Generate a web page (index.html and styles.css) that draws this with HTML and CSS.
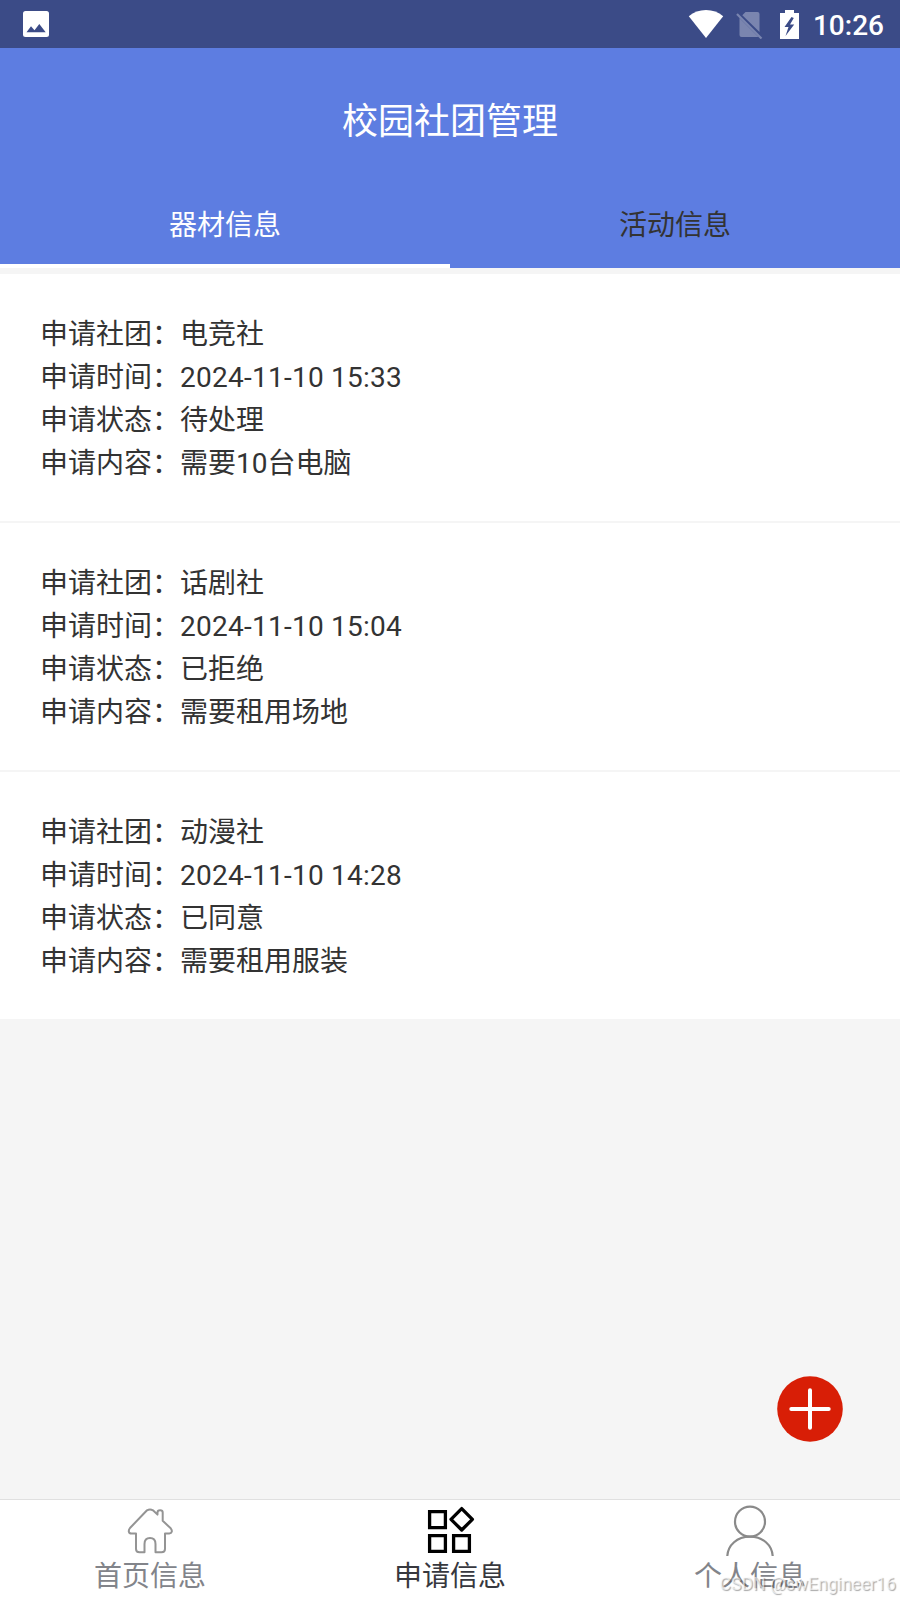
FILE: index.html
```html
<!DOCTYPE html>
<html lang="zh-CN">
<head>
    <meta charset="UTF-8">
    <meta name="viewport" content="width=device-width, initial-scale=1.0">
    <title>校园社团管理</title>
    <link rel="stylesheet" href="styles.css">
</head>
<body>
    <!-- 状态栏 -->
    <div class="status-bar">
        <svg class="status-photo" width="26" height="26" viewBox="0 0 26 26">
            <rect width="26" height="26" rx="2.5" fill="#fff"/>
            <path d="M3.5 21.3L8 15.3l3.5 4L16.3 13l6.4 8.3z" fill="#3b4b87"/>
        </svg>
        <div class="status-right">
            <svg width="36" height="30" viewBox="0 0 36 30">
                <path d="M18 29L.8 7.2C5.500 3 11.500 1 18 1s12.500 2 17.200 6.200z" fill="#fff"/>
            </svg>
            <svg class="sim" width="27" height="28" viewBox="0 0 27 28">
                <path d="M9.500 1H21.500a2 2 0 0 1 2 2V21L6.300 4.200zM3.500 7L22.500 26H5.500a2 2 0 0 1-2-2z" fill="#7a85af"/>
                <path d="M1 3l24.500 24.500" stroke="#7a85af" stroke-width="2.200"/>
            </svg>
            <svg class="battery" width="19" height="29" viewBox="0 0 19 29">
                <path d="M5 0h9v3h5v26H0V3h5z" fill="#fff"/>
                <path d="M11.500 7L4.500 17h4L5.500 26l8.700-11.500H10L13.800 8z" fill="#3b4b87"/>
            </svg>
            <span class="clock">10:26</span>
        </div>
    </div>

    <!-- 标题 -->
    <h1 class="title">校园社团管理</h1>

    <div class="tabs">
        <div class="tab active">器材信息</div>
        <div class="tab">活动信息</div>
    </div>

    <!-- 申请列表 -->
    <div class="list">
        <div class="item">
            <p>申请社团：电竞社</p>
            <p>申请时间：<span class="time">2024-11-10 15:33</span></p>
            <p>申请状态：待处理</p>
            <p>申请内容：需要10台电脑</p>
        </div>
        <div class="item">
            <p>申请社团：话剧社</p>
            <p>申请时间：<span class="time">2024-11-10 15:04</span></p>
            <p>申请状态：已拒绝</p>
            <p>申请内容：需要租用场地</p>
        </div>
        <div class="item">
            <p>申请社团：动漫社</p>
            <p>申请时间：<span class="time">2024-11-10 14:28</span></p>
            <p>申请状态：已同意</p>
            <p>申请内容：需要租用服装</p>
        </div>
    </div>

    <svg class="add" width="66" height="66" viewBox="0 0 66 66">
        <circle cx="33" cy="33" r="32.800" fill="#d81e06"/>
        <path d="M33 14.300v37.400M14.300 33h37.400" stroke="#fff" stroke-width="4" stroke-linecap="round"/>
    </svg>

    <!-- 底部导航 -->
    <div class="nav">
        <div class="nav-item">
            <svg width="50" height="52" viewBox="0 0 50 52" fill="none" stroke="#949494" stroke-width="2" stroke-linejoin="round">
                <path d="M22 5.300q3-1.800 6 0l4.500 4.300V7.500q0-2.200 2.600-2.200t2.600 2.200v8.300l8 7.500c2 2.500 1.300 5-1.500 5.200H40V44q0 3.200-3.500 3.200H30.500V39q0-6-5.500-6t-5.500 6v8.200H14.500q-3.500 0-3.500-3.200V28.500H6.500c-3 0-3.500-3-1.500-5.500z"/>
            </svg>
            <span>首页信息</span>
        </div>
        <div class="nav-item active">
            <svg width="50" height="52" viewBox="0 0 50 52" fill="none" stroke="#000" stroke-width="3.300">
                <path d="M4.600 6.600h15.800v16H4.600zM4.600 30.600h15.800v15.800H4.600zM28.600 30.600h15.800v15.800H28.600z"/>
                <path d="M36.700 3.600l10.700 10.700L36.700 25 26 14.300z" stroke-linejoin="round"/>
            </svg>
            <span>申请信息</span>
        </div>
        <div class="nav-item">
            <svg width="50" height="52" viewBox="0 0 50 52" fill="none" stroke="#8a8a8a" stroke-width="2.200">
                <circle cx="25" cy="16.700" r="15"/>
                <path d="M2.300 51C3 40 12 31.700 25 31.700S47 40 47.700 51"/>
            </svg>
            <span>个人信息</span>
        </div>
    </div>

    <div class="watermark">CSDN @swEngineer16</div>
</body>
</html>
```

FILE: styles.css
```css
body {
    margin: 0;
    height: 1600px;
    display: flex;
    flex-direction: column;
    position: relative;
    overflow: hidden;
    background-color: #f5f5f5;
    color: #333;
    font-family: Roboto, "Noto Sans CJK SC", sans-serif;
    font-size: 28px;
}
svg {
    display: block;
    flex-shrink: 0;
}
.status-bar {
    height: 48px;
    flex-shrink: 0;
    display: flex;
    align-items: center;
    justify-content: space-between;
    box-sizing: border-box;
    padding: 0 16px 0 23px;
    background-color: #3b4b87;
    color: #fff;
}
.status-right {
    display: flex;
    align-items: center;
}
.sim {
    margin-left: 12px;
    margin-top: 2px;
}
.battery {
    margin: 0 14px 0 17px;
}
.clock {
    height: 48px;
    font-size: 28px;
    font-weight: 500;
    line-height: 51px;
}
.title {
    margin: 0;
    height: 132px;
    line-height: 149px;
    flex-shrink: 0;
    background-color: #5d7de1;
    color: #fff;
    font-size: 36px;
    font-weight: 400;
    text-align: center;
}
.tabs {
    display: flex;
    height: 88px;
    flex-shrink: 0;
    background-color: #5d7de1;
}
.tab {
    flex: 1;
    box-sizing: border-box;
    line-height: 91px;
    height: 88px;
    text-align: center;
    border-bottom: 4px solid transparent;
}
.tab.active {
    color: #fff;
    border-bottom-color: #fff;
}
.list {
    display: flex;
    flex-direction: column;
    gap: 2px;
    margin-top: 6px;
}
.item {
    padding: 39px 40px 36px;
    background-color: #fff;
}
.item p {
    margin: 0;
    height: 43px;
    line-height: 43px;
}
.time {
    letter-spacing: 0.25px;
}
.add {
    position: absolute;
    right: 57px;
    bottom: 158px;
}
.nav {
    display: flex;
    height: 101px;
    margin-top: auto;
    box-sizing: border-box;
    border-top: 1px solid #e0e0e0;
    background-color: #fff;
}
.nav-item {
    flex: 1;
    display: flex;
    flex-direction: column;
    align-items: center;
    padding-top: 5px;
    color: #82848a;
}
.nav-item span {
    line-height: 40px;
}
.nav-item.active {
    color: #37383e;
}
.watermark {
    position: absolute;
    right: 4px;
    bottom: 4px;
    font-size: 17.6px;
    line-height: 24px;
    color: rgba(255, 255, 255, 0.6);
    text-shadow: 1px 1px 1px rgba(0, 0, 0, 0.35);
}
```
